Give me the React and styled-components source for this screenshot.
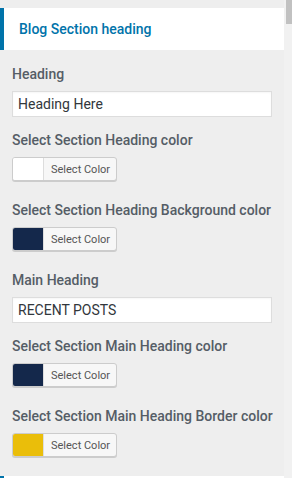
import React from "react";
import styled, { createGlobalStyle } from "styled-components";

const Global = createGlobalStyle`
  html, body { margin: 0; padding: 0; background: #eeeeee; }
  body { font-family: Roboto, "Noto Sans", Arial, sans-serif; }
  #root { height: 478px; overflow: hidden; }
`;

const Frame = styled.div`
  display: flex;
  height: 478px;
  overflow: hidden;
`;

const Panel = styled.div`
  width: 284px;
  flex: none;
  background: #eeeeee;
  padding-top: 8px;
  box-sizing: border-box;
`;

const ScrollTrack = styled.div`
  flex: 1;
  background: #f1f1f1;
  display: flex;
  justify-content: flex-end;
  padding-left: 2px;
`;

const ScrollThumb = styled.div`
  flex: 1;
  height: 24px;
  background: #c1c1c1;
`;

const SectionHeader = styled.div`
  height: 42px;
  background: #ffffff;
  border-left: 4px solid #0073aa;
  display: flex;
  align-items: center;
  padding-left: 15px;
  font-size: 14px;
  font-weight: 500;
  color: #0073aa;
  box-sizing: border-box;
`;

const Body = styled.div`
  padding: 14px 12px 0 12px;
`;

const Control = styled.div`
  margin-bottom: ${(p) => (p.$kind === "text" ? "13px" : "19px")};
`;

const Label = styled.div`
  font-size: 14px;
  line-height: 21px;
  font-weight: 500;
  color: #555d66;
  margin-bottom: 6px;
  white-space: nowrap;
`;

const TextInput = styled.input`
  display: block;
  width: 100%;
  height: 26px;
  box-sizing: border-box;
  border: 1px solid #dddddd;
  background: #ffffff;
  padding: 0 5px;
  font-family: Roboto, "Noto Sans", Arial, sans-serif;
  font-size: 14px;
  color: #32373c;
  outline: none;
  border-radius: 0;
  box-shadow: inset 0 1px 2px rgba(0, 0, 0, 0.04);
`;

const ColorButton = styled.button`
  display: flex;
  align-items: stretch;
  height: 24px;
  padding: 0;
  border: 1px solid #cccccc;
  border-radius: 3px;
  background: #f7f7f7;
  box-shadow: 0 1px 0 #cccccc;
  overflow: hidden;
  box-sizing: border-box;
  cursor: pointer;
`;

const Swatch = styled.span`
  width: 30px;
  background: ${(p) => p.$color};
  border-right: 1px solid #dddddd;
`;

const ButtonText = styled.span`
  display: flex;
  align-items: center;
  padding: 0 6px 0 7px;
  font-family: Roboto, "Noto Sans", Arial, sans-serif;
  font-size: 11px;
  color: #555555;
`;

const NextSection = styled(SectionHeader)`
  margin-top: 0;
`;

const controls = [
  { kind: "text", label: "Heading", value: "Heading Here" },
  { kind: "color", label: "Select Section Heading color", color: "#ffffff" },
  { kind: "color", label: "Select Section Heading Background color", color: "#14284b" },
  { kind: "text", label: "Main Heading", value: "RECENT POSTS" },
  { kind: "color", label: "Select Section Main Heading color", color: "#14284b" },
  { kind: "color", label: "Select Section Main Heading Border color", color: "#eabe0a" },
];

export default function App() {
  return (
    <>
      <Global />
      <Frame>
        <Panel>
          <SectionHeader>Blog Section heading</SectionHeader>
          <Body>
            {controls.map((c) => (
              <Control key={c.label} $kind={c.kind}>
                <Label>{c.label}</Label>
                {c.kind === "text" ? (
                  <TextInput defaultValue={c.value} />
                ) : (
                  <ColorButton type="button">
                    <Swatch $color={c.color} />
                    <ButtonText>Select Color</ButtonText>
                  </ColorButton>
                )}
              </Control>
            ))}
          </Body>
          <NextSection />
        </Panel>
        <ScrollTrack>
          <ScrollThumb />
        </ScrollTrack>
      </Frame>
    </>
  );
}
